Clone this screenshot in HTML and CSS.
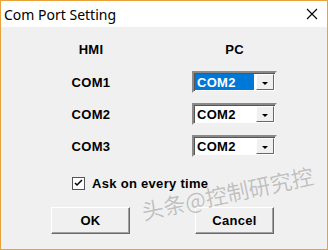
FILE: index.html
```html
<!DOCTYPE html>
<html lang="en">
<head>
  <meta charset="UTF-8" />
  <title>Com Port Setting</title>
  <link rel="stylesheet" href="styles.css">
</head>
<body>
  <div class="window">
    <div class="titlebar">
      <span class="title">Com Port Setting</span>
      <svg class="close" width="12" height="12" viewBox="0 0 12 12">
        <path d="M1 1 L11 11 M11 1 L1 11" stroke="#000" stroke-width="1.1" fill="none"/>
      </svg>
    </div>

    <div class="content">
      <div class="ports">
        <div class="head">HMI</div>
        <div class="head">PC</div>

        <div class="label">COM1</div>
        <div class="combo">
          <span class="value selected">COM2</span>
          <span class="drop"><i></i></span>
        </div>

        <div class="label">COM2</div>
        <div class="combo">
          <span class="value">COM2</span>
          <span class="drop"><i></i></span>
        </div>

        <div class="label">COM3</div>
        <div class="combo">
          <span class="value">COM2</span>
          <span class="drop"><i></i></span>
        </div>
      </div>

      <label class="check">
        <span class="box">
          <svg width="9" height="9" viewBox="0 0 9 9">
            <path d="M1 4 L3 6 L8 1" stroke="#000" stroke-width="1.5" fill="none"/>
          </svg>
        </span>
        Ask on every time
      </label>

      <div class="buttons">
        <button class="btn">OK</button>
        <button class="btn">Cancel</button>
      </div>

      <div class="watermark">头条@控制研究控</div>
    </div>
  </div>
</body>
</html>
```

FILE: styles.css
```css
body { margin:0; background:#fff; }
.window { width:326px; height:248px; border:1px solid #e9a23b; background:#f0f0f0; position:relative; overflow:hidden; font-family:"Liberation Sans", Arial, sans-serif; }

.titlebar { height:26px; background:#fff; display:flex; align-items:center; justify-content:space-between; padding:0 9px 0 3px; }
.title { font-family:"Noto Sans", sans-serif; font-size:14px; color:#000; }
.close { display:block; margin-bottom:1px; }

.content { padding-top:10px; }

.ports { display:grid; grid-template-columns:70px 85px; grid-template-rows:24px 22px 22px 22px; column-gap:66px; row-gap:10px; margin-left:55px; }
.head, .label { font-size:13px; font-weight:bold; letter-spacing:0.3px; text-align:center; align-self:center; }

.combo { display:flex; height:22px; box-sizing:border-box; background:#fff; border:2px solid; border-color:#8a8a8a #f0f0f0 #f0f0f0 #8a8a8a; box-shadow:inset 1px 1px 0 #555; padding:1px; }
.value { flex:1; font-size:13px; font-weight:bold; letter-spacing:0.3px; line-height:17px; padding-left:2px; margin-right:2px; }
.value.selected { background:#0078d7; color:#fff; }
.drop { width:18px; box-sizing:border-box; background:#f0f0f0; border:1px solid; border-color:#fff #696969 #696969 #fff; display:flex; align-items:center; justify-content:center; }
.drop i { width:0; height:0; border-left:3px solid transparent; border-right:3px solid transparent; border-top:3px solid #000; margin-top:2px; }

.check { display:flex; align-items:center; gap:7px; margin:20px 0 0 71px; height:13px; font-size:13px; font-weight:bold; letter-spacing:0.3px; }
.box { width:13px; height:13px; box-sizing:border-box; background:#fff; border:1px solid #555; display:flex; align-items:center; justify-content:center; }

.buttons { display:flex; gap:65px; margin:17px 0 0 50px; }
.btn { width:79px; height:27px; box-sizing:border-box; background:#f0f0f0; border:1px solid; border-color:#fff #696969 #696969 #fff; box-shadow:inset -1px -1px 0 #a0a0a0; font-family:"Liberation Sans", Arial, sans-serif; font-size:13px; font-weight:bold; letter-spacing:0.3px; padding:0; }

.watermark { position:absolute; left:144px; top:193px; font-family:"Noto Sans CJK SC", sans-serif; font-size:22px; color:rgba(140,140,140,0.55); text-shadow:0 0 1px #fff; transform:rotate(-12deg); transform-origin:left bottom; white-space:nowrap; pointer-events:none; }
```
